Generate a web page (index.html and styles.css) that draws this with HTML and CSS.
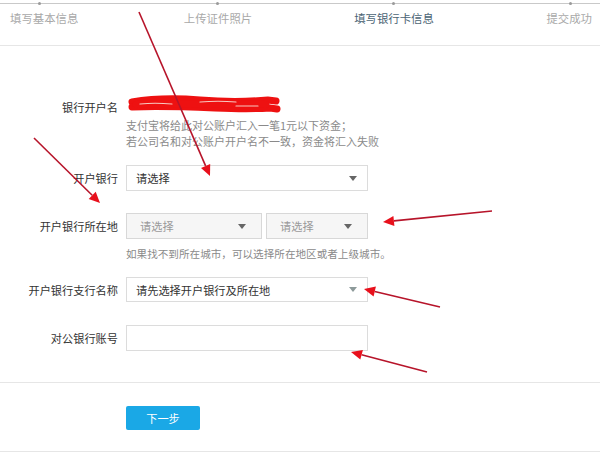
FILE: index.html
```html
<!DOCTYPE html>
<html lang="zh-CN">
<head>
<meta charset="utf-8">
<title>填写银行卡信息</title>
<link rel="stylesheet" href="styles.css">
</head>
<body>
<div class="page">
  <div class="steps">
    <div class="track"></div>
    <div class="step first"><span class="dot"></span>填写基本信息</div>
    <div class="step"><span class="dot"></span>上传证件照片</div>
    <div class="step active"><span class="dot"></span>填写银行卡信息</div>
    <div class="step last"><span class="dot"></span>提交成功</div>
  </div>

  <div class="form">
    <div class="row row-name">
      <div class="label">银行开户名</div>
      <div class="field">
        <div class="name-value"></div>
      </div>
    </div>
    <div class="row row-hint1">
      <div class="label"></div>
      <div class="hint">支付宝将给此对公账户汇入一笔1元以下资金；<br>若公司名和对公账户开户名不一致，资金将汇入失败</div>
    </div>

    <div class="row row-bank">
      <div class="label">开户银行</div>
      <div class="select wide"><span>请选择</span><i class="caret"></i></div>
    </div>

    <div class="row row-loc">
      <div class="label">开户银行所在地</div>
      <div class="pair">
        <div class="select grey left"><span>请选择</span><i class="caret"></i></div>
        <div class="select grey right"><span>请选择</span><i class="caret"></i></div>
      </div>
    </div>
    <div class="row row-hint2">
      <div class="label"></div>
      <div class="hint">如果找不到所在城市，可以选择所在地区或者上级城市。</div>
    </div>

    <div class="row row-branch">
      <div class="label">开户银行支行名称</div>
      <div class="select wide"><span>请先选择开户银行及所在地</span><i class="caret light"></i></div>
    </div>

    <div class="row row-acct">
      <div class="label">对公银行账号</div>
      <div class="input wide"></div>
    </div>
  </div>

  <div class="actions">
    <button class="next">下一步</button>
  </div>

  <svg class="marks" width="600" height="455" viewBox="0 0 600 455">
    <g class="scribble">
      <path d="M132 102 C150 99 175 98 200 100 S 245 102 268 100 L 276 101" />
      <path d="M132 107 C160 106 190 107 215 108 S 255 109 270 108 L 277 109" />
      <path d="M136 104.5 C170 103 220 104 266 104.5" />
    </g>
    <path class="shine" d="M140 104 C150 103 160 103 172 104" />
    <path class="shine" d="M200 102 C212 101 224 101 236 102" />
    <path class="shine" d="M236 106 C244 106 252 106 258 106" />
    <g class="arrow">
      <line x1="139" y1="12" x2="205.6" y2="165.9" />
      <polygon points="210,176 201.0,167.9 210.2,163.9" />
      <line x1="34" y1="138" x2="92.2" y2="195.3" />
      <polygon points="100,203 88.7,198.9 95.7,191.7" />
      <line x1="492" y1="211" x2="393.9" y2="220.9" />
      <polygon points="383,222 393.4,215.9 394.4,225.9" />
      <line x1="440" y1="307" x2="374.7" y2="291.5" />
      <polygon points="364,289 375.9,286.6 373.6,296.4" />
      <line x1="427" y1="372" x2="361.6" y2="354.8" />
      <polygon points="351,352 362.9,350.0 360.3,359.6" />
    </g>
  </svg>
</div>
</body>
</html>
```

FILE: styles.css
```css
* { box-sizing: border-box; }
html, body { margin: 0; padding: 0; background: #fff; }
body {
  font-family: "Noto Sans CJK SC", "Noto Sans", sans-serif;
  color: #333;
  width: 600px;
  height: 455px;
  overflow: hidden;
}
.page {
  position: relative;
  width: 600px;
  height: 455px;
  overflow: hidden;
}

/* steps */
.steps {
  position: relative;
  height: 46px;
  border-bottom: 1px solid #e6e6e6;
  display: grid;
  grid-template-columns: 130px 176px 176px 118px;
}
.track {
  position: absolute;
  left: 0;
  top: 3px;
  width: 600px;
  height: 1px;
  background: #c9c9c9;
}
.step {
  position: relative;
  text-align: center;
  font-size: 11.4px;
  line-height: 16px;
  padding-top: 10px;
  color: #a9a9a9;
}
.step.first { text-align: left; padding-left: 10px; }
.step.last { text-align: right; padding-right: 8px; }
.step.active { color: #4b6474; }
.dot {
  position: absolute;
  left: 50%;
  top: 2px;
  width: 3px;
  height: 3px;
  margin-left: -2px;
  background: #9a9a9a;
  border-radius: 50%;
}
.step.first .dot { left: 40px; }
.step.last .dot { left: 89px; }

/* form */
.form {
  display: flex;
  flex-direction: column;
}
.row {
  display: grid;
  grid-template-columns: 118px 1fr;
  column-gap: 8px;
  align-items: center;
}
.label {
  text-align: right;
  font-size: 11.2px;
  line-height: 16px;
  color: #333;
}
.row-name { margin-top: 53px; height: 16px; }
.name-value { height: 16px; }
.row-hint1 { margin-top: 2px; }
.hint {
  font-size: 11px;
  line-height: 16px;
  color: #8a8a8a;
}
.row-bank { margin-top: 16px; }
.row-loc { margin-top: 22px; }
.row-hint2 { margin-top: 7px; }
.row-hint2 .hint { font-size: 10.6px; }
.row-branch { margin-top: 15px; }
.row-acct { margin-top: 23px; }

.select, .input {
  height: 26px;
  border: 1px solid #dcdcdc;
  background: #fff;
  display: flex;
  align-items: center;
  justify-content: space-between;
  padding: 0 10px 0 9px;
  font-size: 11.2px;
  color: #333;
}
.wide { width: 242px; }
.row-branch .select { height: 25px; }
.pair { display: flex; gap: 4px; }
.select.grey {
  background: #f6f6f6;
  color: #9a9a9a;
  border-color: #d8d8d8;
}
.select.grey.left { width: 136px; padding-left: 13px; padding-right: 15px; }
.select.grey.right { width: 102px; padding-left: 13px; padding-right: 15px; }
.caret {
  width: 0;
  height: 0;
  border-left: 4px solid transparent;
  border-right: 4px solid transparent;
  border-top: 5px solid #666;
}
.caret.light { border-top-color: #8d9a9a; }

/* actions */
.actions {
  margin-top: 31px;
  border-top: 1px solid #e6e6e6;
  border-bottom: 1px solid #e6e6e6;
  padding: 23px 0 21px 126px;
}
.next {
  display: block;
  width: 74px;
  height: 24px;
  border: 0;
  border-radius: 2px;
  background: #1aa8e6;
  color: #fff;
  font-family: "Noto Sans CJK SC", sans-serif;
  font-size: 11.2px;
  padding: 0;
}

/* annotations */
.marks {
  position: absolute;
  left: 0;
  top: 0;
  pointer-events: none;
}
.scribble path {
  fill: none;
  stroke: #ee1111;
  stroke-width: 7;
  stroke-linecap: round;
}
.shine {
  fill: none;
  stroke: #f8c8c0;
  stroke-width: 1.2;
  stroke-linecap: round;
}
.arrow line {
  stroke: #b7142a;
  stroke-width: 1.6;
}
.arrow polygon { fill: #e8101c; }
```
